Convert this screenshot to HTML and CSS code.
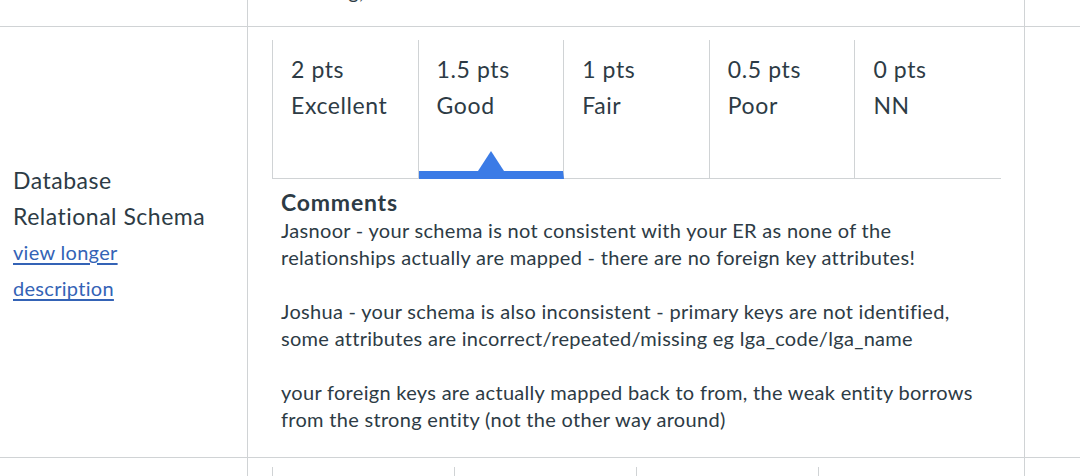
FILE: index.html
```html
<!DOCTYPE html>
<html>
<head>
<meta charset="utf-8">
<link rel="stylesheet" href="styles.css">
</head>
<body>
<div class="rubric">
  <div class="row row-top">
    <div class="cell cell-crit"></div>
    <div class="cell cell-ratings"><div class="prev-text">Missing,</div></div>
    <div class="cell cell-pts"></div>
  </div>
  <div class="row row-main">
    <div class="cell cell-crit crit-main">
      <div class="crit-title">Database</div>
      <div class="crit-title">Relational Schema</div>
      <a class="crit-link" href="#">view longer</a>
      <a class="crit-link" href="#">description</a>
    </div>
    <div class="cell cell-ratings ratings-main">
      <div class="rating-grid five">
        <div class="rating"><div class="r-pts">2 pts</div><div class="r-desc">Excellent</div></div>
        <div class="rating selected"><div class="r-pts">1.5 pts</div><div class="r-desc">Good</div><span class="marker"></span></div>
        <div class="rating"><div class="r-pts">1 pts</div><div class="r-desc">Fair</div></div>
        <div class="rating"><div class="r-pts">0.5 pts</div><div class="r-desc">Poor</div></div>
        <div class="rating"><div class="r-pts">0 pts</div><div class="r-desc">NN</div></div>
      </div>
      <div class="comments">
        <div class="c-title">Comments</div>
        <p>Jasnoor - your schema is not consistent with your ER as none of the relationships actually are mapped - there are no foreign key attributes!</p>
        <p>Joshua - your schema is also inconsistent - primary keys are not identified, some attributes are incorrect/repeated/missing eg lga_code/lga_name</p>
        <p>your foreign keys are actually mapped back to from, the weak entity borrows from the strong entity (not the other way around)</p>
      </div>
    </div>
    <div class="cell cell-pts"></div>
  </div>
  <div class="row row-next">
    <div class="cell cell-crit"></div>
    <div class="cell cell-ratings ratings-next">
      <div class="rating-grid four">
        <div class="rating"></div>
        <div class="rating"></div>
        <div class="rating"></div>
        <div class="rating"></div>
      </div>
    </div>
    <div class="cell cell-pts"></div>
  </div>
</div>
</body>
</html>
```
FILE: styles.css
```css
* { box-sizing: border-box; }
html, body {
  margin: 0;
  padding: 0;
  background: #fff;
  overflow: hidden;
}
body {
  font-family: Lato, "Open Sans", sans-serif;
  color: #2d3b45;
  width: 1080px;
  height: 476px;
}
.rubric {
  display: flex;
  flex-direction: column;
}
.row {
  display: grid;
  grid-template-columns: 248px 777px 1fr;
  border-bottom: 1px solid #d0d3d5;
}
.cell {
  border-right: 1px solid #d0d3d5;
}
.cell-pts { border-right: none; }

.row-top { height: 27px; }
.row-top .cell-ratings {
  overflow: hidden;
}
.prev-text {
  font-size: 20px;
  letter-spacing: 0.3px;
  line-height: 27px;
  padding-left: 42px;
  margin-top: -22px;
}

.row-main { height: 431px; }
.crit-main {
  padding: 135px 0 0 13px;
  display: flex;
  flex-direction: column;
  align-items: flex-start;
}
.crit-title {
  font-size: 23px;
  letter-spacing: 0.5px;
  line-height: 36px;
}
.crit-link {
  font-size: 20px;
  letter-spacing: 0.3px;
  line-height: 36px;
  color: #3463b6;
  text-decoration: underline;
  text-underline-offset: 3px;
}

.ratings-main { padding: 13px 23px 0 24px; }
.ratings-next { padding: 9px 23px 0 24px; }

.rating-grid {
  display: grid;
  border-bottom: 1px solid #d0d3d5;
  border-left: 1px solid #d0d3d5;
}
.rating-grid.five {
  grid-template-columns: repeat(5, 1fr);
  height: 139px;
}
.rating-grid.four {
  grid-template-columns: repeat(4, 1fr);
  height: 60px;
  border-bottom: none;
}
.rating {
  position: relative;
  border-right: 1px solid #d0d3d5;
  padding: 11px 0 0 18px;
}
.rating:last-child { border-right: none; }
.r-pts, .r-desc {
  font-size: 23px;
  letter-spacing: 0.6px;
  line-height: 36px;
}
.rating.selected { border-bottom: 8px solid #3b7be6; margin-bottom: -1px; }
.rating.selected .marker {
  position: absolute;
  left: 50%;
  bottom: 0;
  margin-left: -13px;
  width: 0;
  height: 0;
  border-left: 13px solid transparent;
  border-right: 13px solid transparent;
  border-bottom: 20px solid #3b7be6;
}

.comments {
  padding: 0 20px 0 9px;
  margin-top: 8px;
}
.c-title {
  font-size: 23px;
  font-weight: 700;
  letter-spacing: 0.8px;
  line-height: 30px;
}
.comments p {
  margin: 0 0 27px 0;
  font-size: 20px;
  letter-spacing: 0.3px;
  line-height: 27px;
}
```
